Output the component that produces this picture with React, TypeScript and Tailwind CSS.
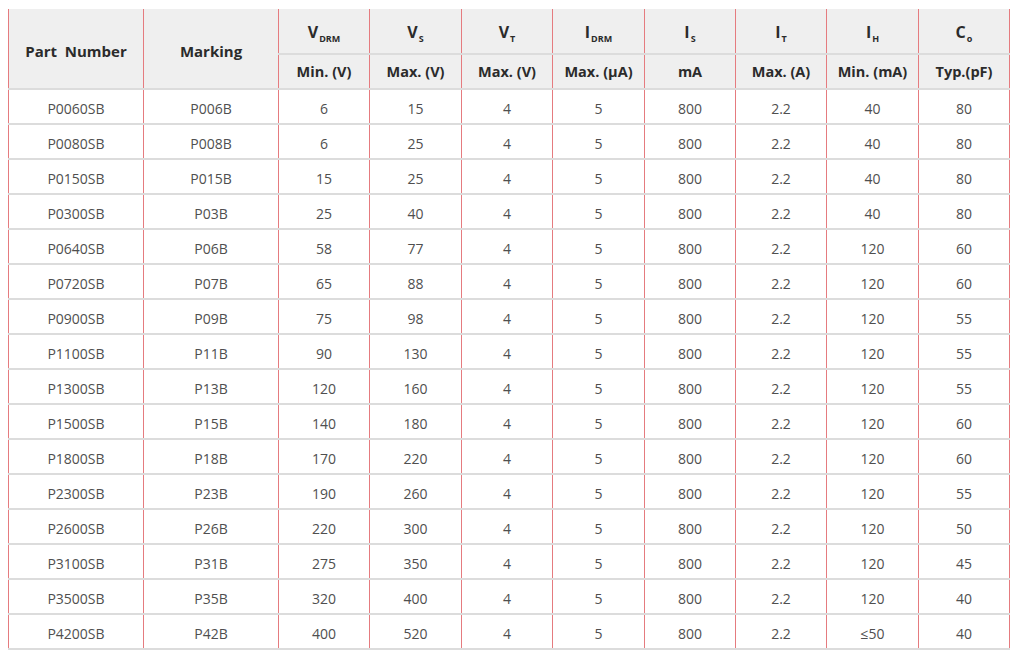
import React from "react";

const rows: string[][] = [
  ["P0060SB", "P006B", "6", "15", "4", "5", "800", "2.2", "40", "80"],
  ["P0080SB", "P008B", "6", "25", "4", "5", "800", "2.2", "40", "80"],
  ["P0150SB", "P015B", "15", "25", "4", "5", "800", "2.2", "40", "80"],
  ["P0300SB", "P03B", "25", "40", "4", "5", "800", "2.2", "40", "80"],
  ["P0640SB", "P06B", "58", "77", "4", "5", "800", "2.2", "120", "60"],
  ["P0720SB", "P07B", "65", "88", "4", "5", "800", "2.2", "120", "60"],
  ["P0900SB", "P09B", "75", "98", "4", "5", "800", "2.2", "120", "55"],
  ["P1100SB", "P11B", "90", "130", "4", "5", "800", "2.2", "120", "55"],
  ["P1300SB", "P13B", "120", "160", "4", "5", "800", "2.2", "120", "55"],
  ["P1500SB", "P15B", "140", "180", "4", "5", "800", "2.2", "120", "60"],
  ["P1800SB", "P18B", "170", "220", "4", "5", "800", "2.2", "120", "60"],
  ["P2300SB", "P23B", "190", "260", "4", "5", "800", "2.2", "120", "55"],
  ["P2600SB", "P26B", "220", "300", "4", "5", "800", "2.2", "120", "50"],
  ["P3100SB", "P31B", "275", "350", "4", "5", "800", "2.2", "120", "45"],
  ["P3500SB", "P35B", "320", "400", "4", "5", "800", "2.2", "120", "40"],
  ["P4200SB", "P42B", "400", "520", "4", "5", "800", "2.2", "≤50", "40"],
];

const widths = [
  "w-[135px]",
  "w-[135px]",
  "w-[91px]",
  "w-[92px]",
  "w-[91px]",
  "w-[92px]",
  "w-[91px]",
  "w-[91px]",
  "w-[92px]",
  "w-[91px]",
];

const sym: [string, string][] = [
  ["V", "DRM"],
  ["V", "S"],
  ["V", "T"],
  ["I", "DRM"],
  ["I", "S"],
  ["I", "T"],
  ["I", "H"],
  ["C", "o"],
];

const units = [
  "Min. (V)",
  "Max. (V)",
  "Max. (V)",
  "Max. (μA)",
  "mA",
  "Max. (A)",
  "Min. (mA)",
  "Typ.(pF)",
];

const cellBorder = "border-x border-x-[#e57b7f] border-b-2 border-b-[#dcdcdc]";

export default function App() {
  return (
    <div
      className="w-[1024px] h-[657px] bg-white pt-[9px] pl-[8px]"
      style={{ fontFamily: '"Open Sans", "Noto Sans", sans-serif' }}
    >
      <table className="table-fixed border-collapse w-[1001px]">
        <colgroup>
          {widths.map((w, i) => (
            <col key={i} className={w} />
          ))}
        </colgroup>
        <thead>
          <tr className="h-[45px] bg-[#efefef]">
            <th
              rowSpan={2}
              className={`${cellBorder} pt-[6px] text-[15px] font-bold text-[#2b2b2b] text-center align-middle`}
            >
              Part&nbsp; Number
            </th>
            <th
              rowSpan={2}
              className={`${cellBorder} pt-[6px] text-[15px] font-bold text-[#2b2b2b] text-center align-middle`}
            >
              Marking
            </th>
            {sym.map(([a, b], i) => (
              <th
                key={i}
                className={`${cellBorder} text-center align-middle pt-[2px] font-bold text-[#2b2b2b]`}
              >
                <span className="text-[16px]">{a}</span>
                <span className="text-[9px] relative top-[4px] ml-[1px]">{b}</span>
              </th>
            ))}
          </tr>
          <tr className="h-[35px] bg-[#efefef]">
            {units.map((u, i) => (
              <th
                key={i}
                className={`${cellBorder} text-[14.5px] font-bold text-[#2b2b2b] text-center align-middle`}
              >
                {u}
              </th>
            ))}
          </tr>
        </thead>
        <tbody>
          {rows.map((r, ri) => (
            <tr key={ri} className="h-[35px]">
              {r.map((c, ci) => (
                <td
                  key={ci}
                  className={`${cellBorder} pt-[3px] text-[14px] text-[#4f4f4f] text-center align-middle`}
                >
                  {c}
                </td>
              ))}
            </tr>
          ))}
        </tbody>
      </table>
    </div>
  );
}
